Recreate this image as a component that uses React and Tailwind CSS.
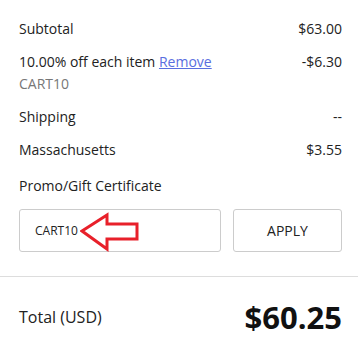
import React from "react";

function Row({ label, value, className = "" }) {
  return (
    <div className={`flex justify-between leading-[20px] ${className}`}>
      <span>{label}</span>
      <span>{value}</span>
    </div>
  );
}

export default function App() {
  return (
    <div
      className="w-[358px] h-[353px] bg-white text-[14px] text-[#222]"
      style={{ fontFamily: '"Open Sans", "Liberation Sans", sans-serif' }}
    >
      <div className="pl-[19px] pr-[16px] pt-[19px]">
        <Row label="Subtotal" value="$63.00" />

        {/* discount */}
        <div className="mt-[13px] flex justify-between leading-[20px]">
          <span>
            10.00% off each item{" "}
            <a href="#" className="text-[#5a6ee0] underline">
              Remove
            </a>
          </span>
          <span>-$6.30</span>
        </div>
        <div className="mt-[2px] leading-[20px] text-[#777]">CART10</div>

        <Row label="Shipping" value="--" className="mt-[13px]" />
        <Row label="Massachusetts" value="$3.55" className="mt-[13px]" />

        <div className="mt-[16px] leading-[20px]">Promo/Gift Certificate</div>

        <div className="mt-[13px] flex gap-[12px]">
          <div className="relative w-[202px] h-[43px] border border-[#ccc] rounded-[3px] flex items-center pl-[15px] text-[12px]">
            CART10
            <svg
              className="absolute left-[60px] top-[2px]"
              width="62"
              height="40"
              viewBox="0 0 62 40"
            >
              <path
                d="M2 19 L27 3 L27 12 L57 12 L57 27 L27 27 L27 37 Z"
                fill="none"
                stroke="#e8202a"
                strokeWidth="3"
                strokeLinejoin="miter"
              />
            </svg>
          </div>
          <button className="flex-1 h-[43px] border border-[#ccc] rounded-[3px] text-[14px] text-[#222]">
            APPLY
          </button>
        </div>
      </div>

      <div className="mt-[24px] border-t border-[#ddd]" />

      <div className="pl-[19px] pr-[16px] mt-[20px] flex justify-between items-center">
        <span className="text-[16px]">Total (USD)</span>
        <span className="text-[31px] font-bold leading-[40px] text-[#111]">$60.25</span>
      </div>
    </div>
  );
}
